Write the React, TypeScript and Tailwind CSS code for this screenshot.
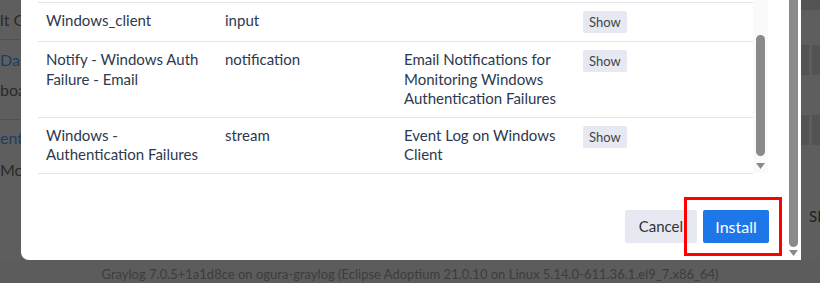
import React from "react";

const rows = [
  { title: ["Windows_client"], type: "input", desc: [] as string[] },
  {
    title: ["Notify - Windows Auth", "Failure - Email"],
    type: "notification",
    desc: ["Email Notifications for", "Monitoring Windows", "Authentication Failures"],
  },
  {
    title: ["Windows -", "Authentication Failures"],
    type: "stream",
    desc: ["Event Log on Windows", "Client"],
  },
];

function Arrow({ className }: { className?: string }) {
  return (
    <svg width="9" height="6" viewBox="0 0 9 6" className={className}>
      <path d="M0 0 H9 L4.5 6 Z" fill="#8a8a8a" />
    </svg>
  );
}

export default function App() {
  return (
    <div
      className="relative w-[820px] h-[283px] overflow-hidden bg-[#5c5c5c] text-[15px]"
      style={{ fontFamily: "'Source Sans Pro', Lato, 'Liberation Sans', sans-serif" }}
    >
      {/* dimmed page underneath */}
      <div className="flex h-[260px]">
        <div className="w-[21px] flex flex-col text-[#2a2a2a] bg-[#5e5e5e] leading-[20px] text-[16px]">
          <div className="h-[40px] pt-[10px] border-b border-[#525252] whitespace-nowrap">lt G</div>
          <div className="pt-[10px] text-[#1d3b66] whitespace-nowrap">Das</div>
          <div className="h-[50px] pt-[10px] border-b border-[#525252] whitespace-nowrap">boa</div>
          <div className="pt-[8px] text-[#1d3b66] whitespace-nowrap">ent</div>
          <div className="pt-[12px] whitespace-nowrap">Mon</div>
        </div>
        <div className="flex-1" />
        <div className="w-[19px] flex flex-col bg-[#5e5e5e]">
          <div className="h-[10px] bg-[#545454]" />
          <div className="h-[35px]" />
          <div className="h-[30px] flex gap-[3px]">
            <div className="w-[8px] bg-[#535353]" />
            <div className="w-[8px] bg-[#535353]" />
          </div>
          <div className="h-[40px]" />
          <div className="h-[30px] flex gap-[3px]">
            <div className="w-[8px] bg-[#535353]" />
            <div className="w-[8px] bg-[#535353]" />
          </div>
          <div className="pt-[60px] pl-[8px] text-[#1f1f1f] whitespace-nowrap">SI</div>
        </div>
      </div>
      <div className="h-[23px] pt-[6px] flex items-center justify-center text-[#3d3d3d] text-[13px] whitespace-nowrap">
        Graylog 7.0.5+1a1d8ce on ogura-graylog (Eclipse Adoptium 21.0.10 on Linux 5.14.0-611.36.1.el9_7.x86_64)
      </div>

      {/* modal */}
      <div className="absolute left-[21px] top-0 w-[780px] h-[260px] bg-white rounded-bl-[8px] flex">
        <div className="flex-1 flex flex-col pl-[17px] pr-[20px]">
          <div className="h-[173px] flex">
            <div className="flex-1 text-[#2c3950] leading-[19.5px]">
              <div className="border-t border-[#e3e5ea] mt-[2px]" />
              {rows.map((r, i) => (
                <div key={i} className="flex border-b border-[#e3e5ea] pt-[8px] pb-[8px]">
                  <div className="w-[187px] pl-[8px]">
                    {r.title.map((t) => (
                      <div key={t}>{t}</div>
                    ))}
                  </div>
                  <div className="w-[179px]">{r.type}</div>
                  <div className="w-[179px]">
                    {r.desc.map((t) => (
                      <div key={t}>{t}</div>
                    ))}
                  </div>
                  <div>
                    <span className="inline-block px-[6px] h-[22px] leading-[22px] bg-[#e6e9f2] text-[#444] text-[13px] rounded-[2px]">
                      Show
                    </span>
                  </div>
                </div>
              ))}
            </div>
            <div className="w-[15px] bg-[#fafafa] flex flex-col items-center">
              <div className="mt-[35px] w-[9px] h-[121px] bg-[#8a8a8a] rounded-full" />
              <Arrow className="mt-[7px]" />
            </div>
          </div>
          <div className="flex-1 flex justify-end items-start pt-[37px] mr-[-14px]">
            <button className="h-[33px] px-[14px] bg-[#e6e9f2] text-[#333] text-[15px] rounded-[2px]">
              Cancel
            </button>
            <div className="ml-[-13px] mt-[-13px] border-[3px] border-[#ff0000] pt-[10px] pb-[10px] pl-[16px] pr-[10px]">
              <button className="h-[33px] w-[66px] bg-[#1d77e8] text-white text-[16px] rounded-[2px]">
                Install
              </button>
            </div>
          </div>
        </div>
        <div className="w-[13px] flex flex-col items-center pr-[3px]">
          <div className="w-[9px] h-[247px] bg-[#8a8a8a] rounded-b-full" />
          <Arrow className="mt-[3px]" />
        </div>
      </div>
    </div>
  );
}
